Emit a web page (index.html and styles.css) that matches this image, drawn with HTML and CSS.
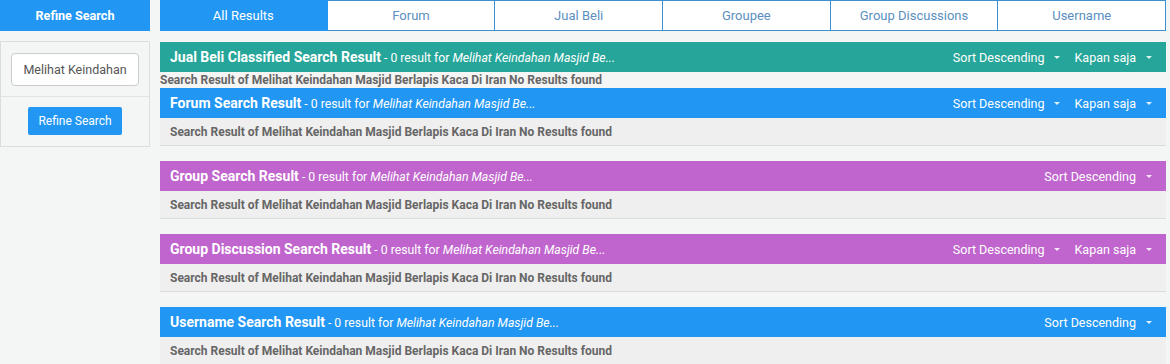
FILE: index.html
```html
<!DOCTYPE html>
<html>
<head>
<meta charset="utf-8">
<link rel="stylesheet" href="styles.css">
</head>
<body>
<div class="page">
  <aside class="side">
    <div class="side-head">Refine Search</div>
    <div class="side-box">
      <div class="side-input-wrap"><div class="side-input">Melihat Keindahan</div></div>
      <div class="side-btn-wrap"><button class="btn">Refine Search</button></div>
    </div>
  </aside>
  <main class="main">
    <nav class="tabs">
      <div class="tab active">All Results</div>
      <div class="tab">Forum</div>
      <div class="tab">Jual Beli</div>
      <div class="tab">Groupee</div>
      <div class="tab">Group Discussions</div>
      <div class="tab">Username</div>
    </nav>

    <section class="sec sec-plain">
      <div class="sec-head teal">
        <div class="title"><b>Jual Beli Classified Search Result</b> - 0 result for <i>Melihat Keindahan Masjid Be...</i></div>
        <div class="opts"><span class="opt">Sort Descending<span class="caret"></span></span><span class="opt">Kapan saja<span class="caret"></span></span></div>
      </div>
      <div class="sec-body">Search Result of Melihat Keindahan Masjid Berlapis Kaca Di Iran No Results found</div>
    </section>

    <section class="sec">
      <div class="sec-head blue">
        <div class="title"><b>Forum Search Result</b> - 0 result for <i>Melihat Keindahan Masjid Be...</i></div>
        <div class="opts"><span class="opt">Sort Descending<span class="caret"></span></span><span class="opt">Kapan saja<span class="caret"></span></span></div>
      </div>
      <div class="sec-body">Search Result of Melihat Keindahan Masjid Berlapis Kaca Di Iran No Results found</div>
    </section>

    <section class="sec">
      <div class="sec-head purple">
        <div class="title"><b>Group Search Result</b> - 0 result for <i>Melihat Keindahan Masjid Be...</i></div>
        <div class="opts"><span class="opt">Sort Descending<span class="caret"></span></span></div>
      </div>
      <div class="sec-body">Search Result of Melihat Keindahan Masjid Berlapis Kaca Di Iran No Results found</div>
    </section>

    <section class="sec">
      <div class="sec-head purple">
        <div class="title"><b>Group Discussion Search Result</b> - 0 result for <i>Melihat Keindahan Masjid Be...</i></div>
        <div class="opts"><span class="opt">Sort Descending<span class="caret"></span></span><span class="opt">Kapan saja<span class="caret"></span></span></div>
      </div>
      <div class="sec-body">Search Result of Melihat Keindahan Masjid Berlapis Kaca Di Iran No Results found</div>
    </section>

    <section class="sec">
      <div class="sec-head blue">
        <div class="title"><b>Username Search Result</b> - 0 result for <i>Melihat Keindahan Masjid Be...</i></div>
        <div class="opts"><span class="opt">Sort Descending<span class="caret"></span></span></div>
      </div>
      <div class="sec-body">Search Result of Melihat Keindahan Masjid Berlapis Kaca Di Iran No Results found</div>
    </section>
  </main>
</div>
</body>
</html>
```

FILE: styles.css
```css
* { box-sizing: border-box; }
html, body { margin: 0; padding: 0; }
body {
  background: #f4f5f5;
  font-family: Roboto, "Liberation Sans", Arial, sans-serif;
  color: #666;
  overflow: hidden;
}
.page {
  display: flex;
  gap: 10px;
  width: 1166px;
  align-items: flex-start;
}
.side { width: 150px; flex: none; }
.side-head {
  height: 31px;
  background: #2196f3;
  color: #fff;
  font-weight: 700;
  font-size: 12.6px;
  display: flex;
  align-items: center;
  justify-content: center;
}
.side-box {
  margin-top: 10px;
  border: 1px solid #ddd;
  background: #f4f5f5;
  height: 106px;
}
.side-input-wrap {
  padding: 11px 10px 10px 10px;
  border-bottom: 1px solid #e2e2e2;
}
.side-input {
  height: 33px;
  background: #fff;
  border: 1px solid #ccc;
  border-radius: 4px;
  font-size: 12.5px;
  color: #555;
  display: flex;
  align-items: center;
  justify-content: center;
}
.side-btn-wrap {
  display: flex;
  justify-content: center;
  padding-top: 10px;
}
.btn {
  width: 94px;
  height: 28px;
  border: 0;
  border-radius: 2px;
  background: #2196f3;
  color: #fff;
  font-family: inherit;
  font-size: 12px;
  padding: 0;
}
.main { flex: 1; min-width: 0; }
.tabs {
  display: flex;
  height: 31px;
  margin-bottom: 11px;
}
.tab {
  flex: 1;
  display: flex;
  align-items: center;
  justify-content: center;
  font-size: 13px;
  color: #5b8fbf;
  background: #fff;
  border: 1px solid #3d8fd0;
  border-left: 0;
}
.tab.active {
  background: #2196f3;
  border-color: #2196f3;
  color: #fff;
}
.sec { margin-bottom: 15px; }
.sec-head {
  height: 30px;
  display: flex;
  align-items: center;
  justify-content: space-between;
  padding: 0 14px 0 10px;
  color: #fff;
  font-size: 12.25px;
}
.sec-head b { font-size: 14px; font-weight: 700; }
.teal { background: #26a69a; }
.blue { background: #2196f3; }
.purple { background: #c065cd; }
.opts { display: flex; gap: 14px; font-size: 12.5px; }
.opt { display: flex; align-items: center; }
.caret {
  display: inline-block;
  width: 0; height: 0;
  margin-left: 10px;
  border-left: 3px solid transparent;
  border-right: 3px solid transparent;
  border-top: 3px solid #fff;
  opacity: 0.85;
}
.sec-body {
  height: 28px;
  background: #efefef;
  border-bottom: 1px solid #dcdcdc;
  font-size: 12px;
  font-weight: 700;
  color: #666;
  display: flex;
  align-items: center;
  padding-left: 10px;
}
.sec-plain { margin-bottom: 0; }
.sec-plain .sec-body {
  height: 16px;
  background: transparent;
  border-bottom: 0;
  padding-left: 0;
}
```
